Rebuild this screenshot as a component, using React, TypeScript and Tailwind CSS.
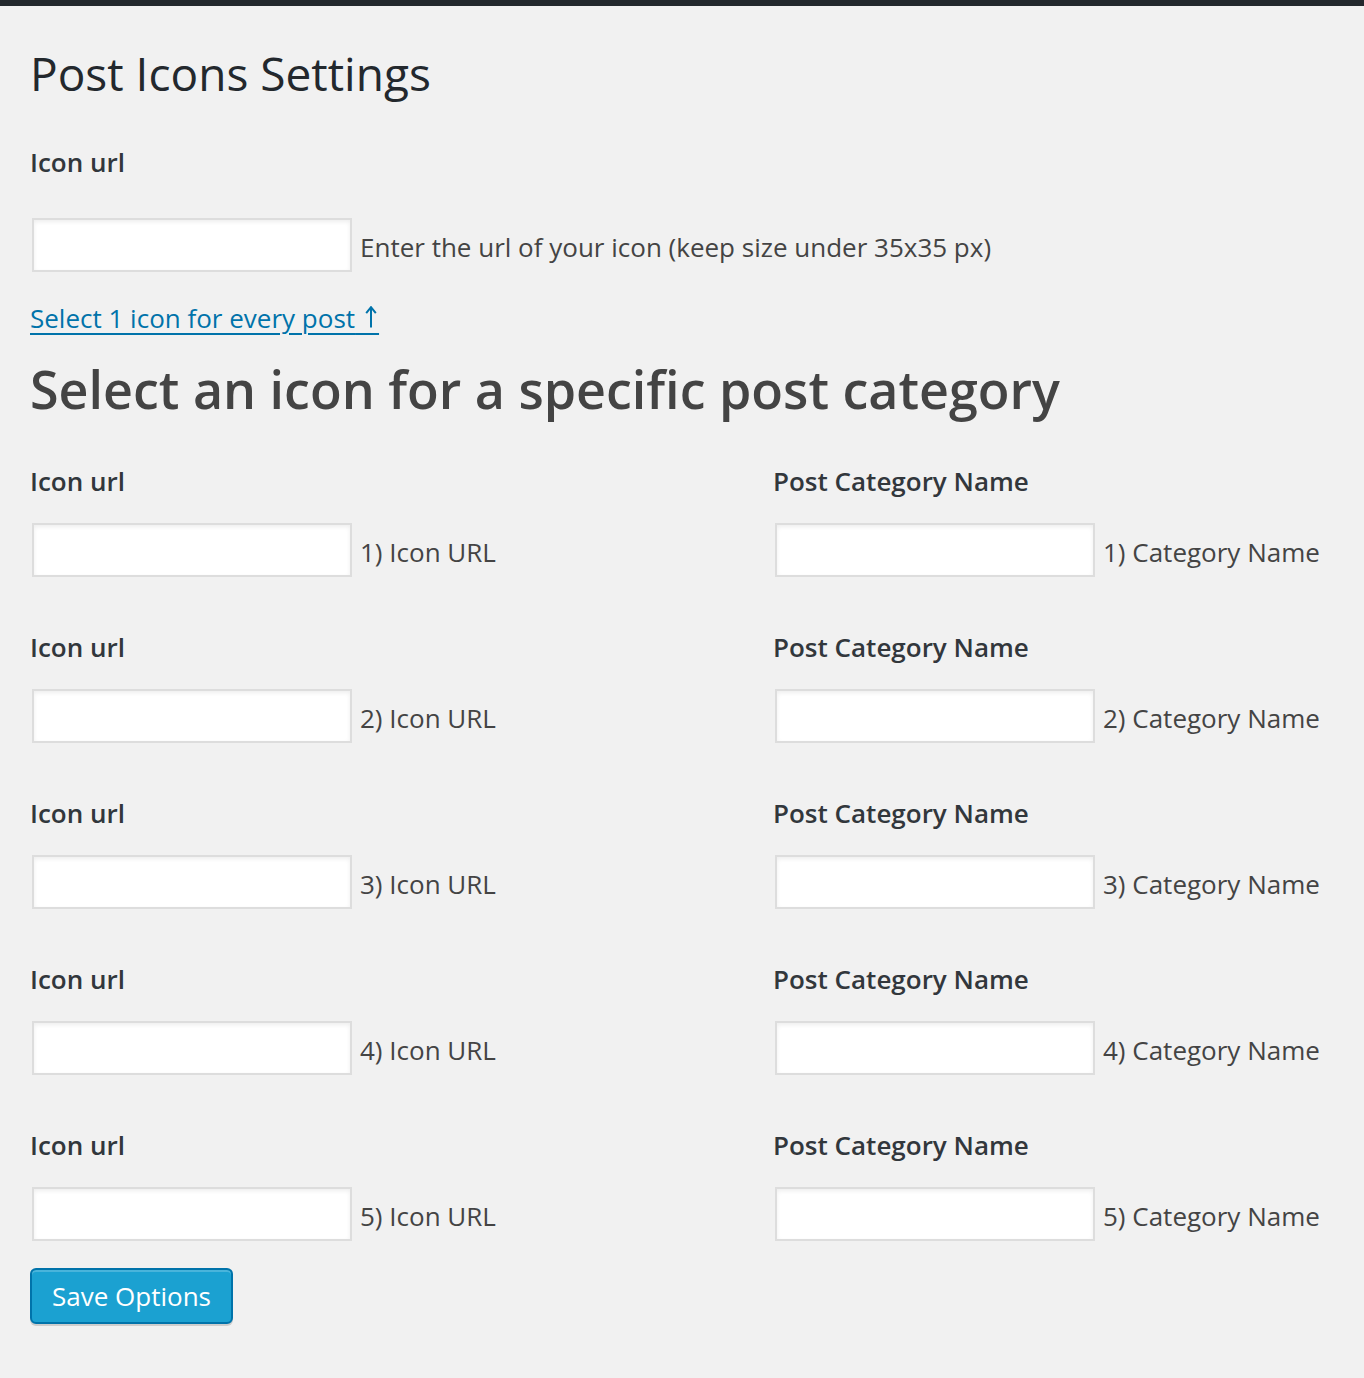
const rows = [1, 2, 3, 4, 5];

function TextField(props: { note: string }) {
  return (
    <div className="flex items-center">
      <input
        type="text"
        className="ml-[2px] h-[54px] w-[320px] border-2 border-[#dddddd] bg-white shadow-[inset_0_2px_4px_rgba(0,0,0,0.07)] outline-none"
      />
      <span className="ml-[8px] mt-[3px] text-[26px] leading-[40px] text-[#444444]">{props.note}</span>
    </div>
  );
}

function Field(props: { label: string; note: string; gap: string }) {
  return (
    <div className="flex flex-col">
      <div className="text-[26px] font-semibold leading-[40px] text-[#32373c]">{props.label}</div>
      <div className={props.gap}>
        <TextField note={props.note} />
      </div>
    </div>
  );
}

export default function App() {
  return (
    <div
      className="min-h-[1378px] bg-[#f1f1f1]"
      style={{ fontFamily: '"Open Sans", "Liberation Sans", sans-serif' }}
    >
      <div className="h-[6px] bg-[#23282d]" />

      <div className="px-[30px]">
        {/* Page title */}
        <h1 className="mt-[38px] text-[46px] font-normal leading-[58px] text-[#23282d]">
          Post Icons Settings
        </h1>

        {/* Global icon */}
        <div className="mt-[40px]">
          <Field label="Icon url" note="Enter the url of your icon (keep size under 35x35 px)" gap="mt-[36px]" />
        </div>

        <a
          href="#"
          className="mt-[26px] inline-block text-[26px] leading-[40px] text-[#0073aa] underline decoration-2 underline-offset-[5px]"
        >
          Select 1 icon for every post
          <span className="relative text-[24px]">
            {"\u2003"}
            <svg
              width="12"
              height="22"
              viewBox="0 0 12 22"
              className="absolute left-[10px] top-[4px]"
              aria-hidden="true"
            >
              <path d="M6 21.5V2" stroke="#0073aa" strokeWidth="2" fill="none" />
              <path d="M1.2 7.2L6 1.2L10.8 7.2" stroke="#0073aa" strokeWidth="2" fill="none" />
            </svg>
          </span>
        </a>

        {/* Per category */}
        <h2 className="mt-[18px] text-[52px] font-semibold leading-[64px] text-[#444444]">
          Select an icon for a specific post category
        </h2>

        <div className="mt-[40px] flex flex-col gap-[50px]">
          {rows.map((n) => (
            <div key={n} className="grid grid-cols-[743px_1fr]">
              <Field label="Icon url" note={`${n}) Icon URL`} gap="mt-[22px]" />
              <Field label="Post Category Name" note={`${n}) Category Name`} gap="mt-[22px]" />
            </div>
          ))}
        </div>

        <button
          type="button"
          className="mt-[27px] h-[56px] rounded-[6px] border-2 border-[#0073aa] bg-[#1ba1d1] px-[20px] text-[26px] leading-[40px] text-white shadow-[inset_0_2px_0_rgba(120,200,230,0.5),0_2px_0_rgba(0,0,0,0.15)]"
        >
          Save Options
        </button>
      </div>
    </div>
  );
}
